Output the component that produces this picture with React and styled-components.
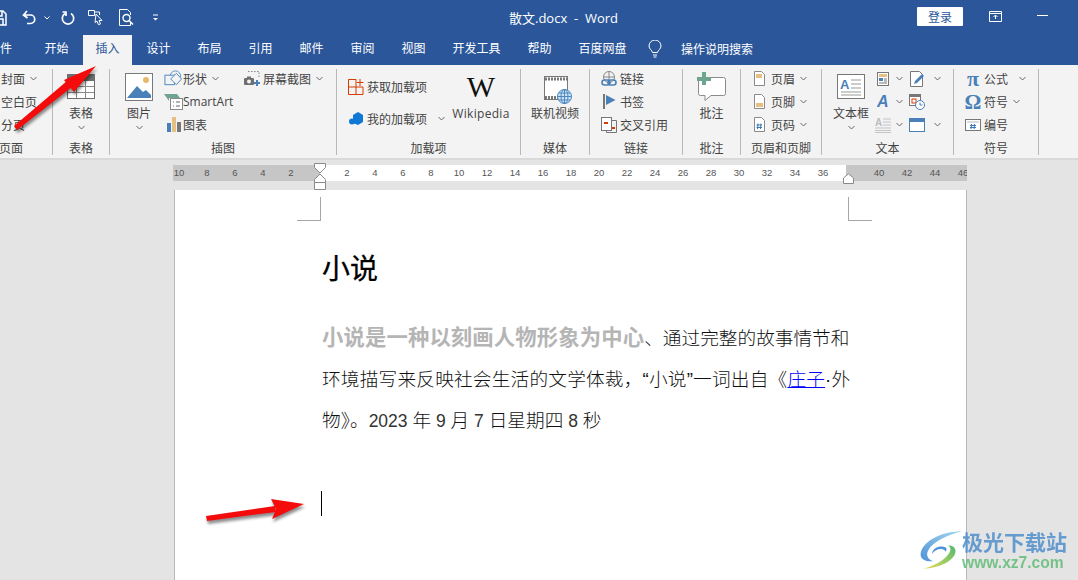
import React from 'react'
import styled, { createGlobalStyle } from 'styled-components'

const GlobalStyle = createGlobalStyle`
  html, body {
    margin: 0;
    padding: 0;
    overflow: hidden;
    background: #e4e4e4;
  }
`

const Shell = styled.div`
  position: relative;
  width: 1078px;
  height: 580px;
  overflow: hidden;
  background: #e4e4e4;
  font-family: "Open Sans", "Noto Sans CJK SC", sans-serif;
  font-size: 12px;
  color: #444;
`

const TitleBar = styled.div`
  display: flex;
  align-items: center;
  height: 35px;
  background: #2b579a;
  color: #fff;
`

const QuickAccess = styled.div`
  display: flex;
  align-items: center;
  width: 518px;
  flex: none;
  margin-left: -9px;
`

const QuickIcon = styled.svg`
  flex: none;
  margin-left: ${p => p.$ml || 0}px;
  fill: none;
  stroke: #fff;
`

const DocTitle = styled.div`
  font-size: 13px;
  white-space: pre;
  width: 408px;
  flex: none;
`

const LoginButton = styled.button`
  width: 46px;
  height: 19px;
  margin-top: -2px;
  padding: 0;
  border: 0;
  border-radius: 1px;
  background: #fff;
  color: #2b579a;
  font: 12px "Noto Sans CJK SC", sans-serif;
  flex: none;
`

const WindowIcon = styled.svg`
  flex: none;
  margin-left: ${p => p.$ml}px;
  margin-top: ${p => p.$mt}px;
  fill: none;
  stroke: #fff;
`

const TabBar = styled.div`
  display: flex;
  align-items: stretch;
  height: 30px;
  margin-left: -19px;
  background: #2b579a;
  gap: 2px;
`

const Tab = styled.div`
  width: 49px;
  flex: none;
  text-align: center;
  line-height: 28px;
  white-space: nowrap;
  color: ${p => (p.$active ? '#2b579a' : '#fff')};
  background: ${p => (p.$active ? '#f3f3f3' : 'transparent')};
`

const FileTab = styled(Tab)`
  text-align: left;
  text-indent: 7px;
`

const WideTab = styled(Tab)`
  width: ${p => p.$w}px;
`

const SearchHint = styled.div`
  display: flex;
  align-items: center;
  height: 28px;
  gap: 19px;
  margin-left: 7px;
  color: #fff;
`

const Ribbon = styled.div`
  display: flex;
  height: 89px;
  padding-top: 4px;
  margin-left: -30px;
  background: #f3f3f3;
  border-bottom: 2px solid #d9d9d9;
`

const Group = styled.div`
  display: flex;
  flex-direction: column;
  flex: none;
  box-sizing: border-box;
  width: ${p => p.$w}px;
  height: 86px;
  border-right: 1px solid #b9b9b9;
`

const GroupBody = styled.div`
  display: flex;
  flex: 1;
  margin-top: -2px;
  padding-left: ${p => p.$pad || 0}px;
  gap: ${p => p.$gap || 0}px;
`

const GroupLabel = styled.div`
  height: 14px;
  line-height: 16px;
  text-align: center;
  white-space: nowrap;
`

const BigItem = styled.div`
  display: flex;
  flex-direction: column;
  align-items: center;
  flex: none;
  width: ${p => p.$w}px;
  white-space: nowrap;
`

const BigIcon = styled.div`
  display: flex;
  align-items: center;
  justify-content: center;
  height: 39px;
`

const BigText = styled.div`
  height: 16px;
  line-height: 16px;
  letter-spacing: ${p => p.$track || 0}px;
`

const WikiGlyph = styled.span`
  font: 400 30px/30px "Liberation Serif", serif;
  color: #111;
`

const Col = styled.div`
  display: flex;
  flex-direction: column;
  flex: none;
  width: ${p => (p.$w ? `${p.$w}px` : 'auto')};
  margin-top: ${p => p.$mt || 0}px;
  gap: ${p => p.$gap || 0}px;
`

const SmallItem = styled.div`
  display: flex;
  align-items: center;
  height: 23px;
  white-space: nowrap;
`

const IconSlot = styled.span`
  display: flex;
  align-items: center;
  justify-content: center;
  flex: none;
  width: ${p => p.$w}px;
  margin-right: ${p => p.$mr || 0}px;
`

const ChevronIcon = styled.svg`
  flex: none;
  margin-left: ${p => (p.$ml === undefined ? 5 : p.$ml)}px;
  margin-top: ${p => p.$mt || 0}px;
  fill: none;
  stroke: #666;
`

const SymbolGlyph = styled.span`
  display: flex;
  justify-content: center;
  font: 700 ${p => p.$size}px/16px "Liberation Serif", serif;
  color: #4a80b8;
`

const Workspace = styled.div`
  display: flex;
  flex-direction: column;
  padding-top: 5px;
`

const Ruler = styled.div`
  display: flex;
  height: 16px;
  margin-left: 173px;
  width: 794px;
  overflow: hidden;
  background: linear-gradient(
    to right,
    #c6c6c6 147px,
    #fff 147px,
    #fff 673px,
    #c6c6c6 673px
  );
`

const RulerTick = styled.span`
  flex: none;
  width: 28px;
  text-align: center;
  font: 9.5px/16px "Liberation Sans", sans-serif;
  color: #555;
  &:first-child {
    margin-left: -8px;
  }
`

const Page = styled.div`
  box-sizing: border-box;
  width: 793px;
  height: 400px;
  margin: 9px 0 0 174px;
  background: #fff;
  border-left: 1px solid #b8b8b8;
  border-right: 1px solid #b8b8b8;
  padding: 7px 94px 0 122px;
  color: #111;
`

const CropRow = styled.div`
  display: flex;
  justify-content: space-between;
`

const CropMark = styled.div`
  box-sizing: border-box;
  width: 24px;
  height: 24px;
  border-bottom: 1px solid #a6a6a6;
  border-${p => p.$side}: 1px solid #a6a6a6;
`

const TextColumn = styled.div`
  padding-left: 25px;
  font-family: "Liberation Sans", "Noto Sans CJK SC", sans-serif;
`

const Heading = styled.h1`
  margin: 27px 0 26px;
  font-size: 28px;
  line-height: 44px;
  font-weight: 400;
  -webkit-text-stroke: 0.3px #000;
  color: #000;
`

const Line = styled.div`
  height: 41px;
  line-height: 41px;
  font-size: 18.67px;
  font-weight: 300;
  white-space: nowrap;
  letter-spacing: ${p => p.$track || 0}px;
`

const Faded = styled.span`
  font-size: 21.33px;
  font-weight: 700;
  letter-spacing: 0.15px;
  color: #b5b5b5;
`

const Digits = styled.span`
  font-size: 17.5px;
  color: #333;
`

const DocLink = styled.a`
  color: #0000ff;
  text-decoration: underline;
`

const Caret = styled.div`
  width: 1px;
  height: 25px;
  margin: 50px 0 0 -1px;
  background: #000;
`

const Overlay = styled.svg`
  position: absolute;
  left: ${p => p.$x}px;
  top: ${p => p.$y}px;
  pointer-events: none;
`

const Watermark = styled.div`
  position: absolute;
  left: 920px;
  top: 530px;
  display: flex;
  align-items: flex-start;
`

const WatermarkText = styled.div`
  display: flex;
  flex-direction: column;
  opacity: 0.85;
`

const WatermarkName = styled.div`
  font: 700 21px/23px "Noto Sans CJK SC", sans-serif;
  color: #4f8fcb;
  white-space: nowrap;
`

const WatermarkUrl = styled.div`
  font: 700 15.6px/19px "Liberation Sans", sans-serif;
  color: #62bd78;
  white-space: nowrap;
`

const Chevron = ({ ml, mt }) => (
  <ChevronIcon width="7" height="5" viewBox="0 0 7 5" $ml={ml} $mt={mt}>
    <path d="M.5 1 3.5 4 6.5 1" />
  </ChevronIcon>
)

const Svg = ({ w, h, children }) => (
  <svg width={w} height={h} viewBox={`0 0 ${w} ${h}`} fill="none">
    {children}
  </svg>
)

const TableIcon = () => (
  <Svg w={28} h={25}>
    <rect x=".5" y=".5" width="27" height="24" fill="#fff" stroke="#6f6f6f" />
    <rect x="0" y="0" width="28" height="7" fill="#6f6f6f" />
    <path d="M9.5 7v17M18.5 7v17M1 12.5h26M1 18.5h26" stroke="#8a8a8a" />
  </Svg>
)

const PictureIcon = () => (
  <Svg w={28} h={28}>
    <rect x=".5" y=".5" width="27" height="27" fill="#fff" stroke="#7a7a7a" />
    <circle cx="21" cy="7" r="3" fill="#e8b96b" />
    <path d="M2 25 12 13l6 6 3-2 5 5v3z" fill="#4a80b8" />
  </Svg>
)

const ShapeIcon = () => (
  <Svg w={20} h={17}>
    <circle cx="12" cy="6" r="5.5" stroke="#5c8fc4" />
    <rect x="1" y="5" width="10" height="10" stroke="#4a86c0" fill="#f3f3f3" />
    <path d="M13 3l5.5 6-5.5 6-6-6z" stroke="#4a86c0" fill="#f3f3f3" />
  </Svg>
)

const SmartArtIcon = () => (
  <Svg w={19} h={17}>
    <path d="M0 1h13l3 4H5v3z" fill="#6fa58e" />
    <rect x="6.5" y="5.5" width="12" height="11" fill="#fff" stroke="#8a8a8a" />
    <path d="M9 9h1M12 9h4M9 13h1M12 13h4" stroke="#666" />
  </Svg>
)

const ChartIcon = () => (
  <Svg w={14} h={15}>
    <rect x="0" y="6" width="4" height="9" fill="#4a80b8" />
    <rect x="5" y="0" width="4" height="15" fill="#e8bf82" />
    <rect x="10" y="5" width="4" height="10" fill="#777" />
  </Svg>
)

const ScreenshotIcon = () => (
  <Svg w={17} h={15}>
    <path d="M4 .5h11v7" stroke="#888" strokeDasharray="1.5 1.5" />
    <rect x="0" y="7" width="10" height="7" rx="1" fill="#6f6f6f" />
    <rect x="3" y="5.5" width="4" height="2" fill="#6f6f6f" />
    <circle cx="5" cy="10.5" r="2" fill="#f3f3f3" />
    <path d="M13 9v6M10 12h6" stroke="#4a80b8" strokeWidth="2" />
  </Svg>
)

const StoreIcon = () => (
  <Svg w={16} h={16}>
    <path d="M.5.5H8V8h7v7.500H.5zM.5 8H8v7.500" stroke="#d83b01" />
    <path d="M12 0v7M8.800 3.500H15.500" stroke="#d83b01" />
  </Svg>
)

const MyAddinIcon = () => (
  <Svg w={15} h={15}>
    <path d="M4 4 9 1l5 3v7l-5 3-5-2z" fill="#0f78d4" />
    <circle cx="3" cy="10.5" r="3" fill="#0f78d4" />
  </Svg>
)

const VideoIcon = () => (
  <Svg w={33} h={34}>
    <g transform="translate(5 6)">
      <rect x=".5" y=".5" width="23" height="23" fill="#fff" stroke="#777" />
      <path d="M1 3h22" stroke="#777" strokeWidth="3" strokeDasharray="2 1" />
      <path d="M1 21.5h22" stroke="#777" strokeWidth="3" strokeDasharray="2 1" />
      <circle cx="20.500" cy="20.500" r="7" fill="#cfe3f4" stroke="#4a86c0" />
      <path d="M13.500 20.500h14M20.500 13.500v14M15 17h11M15 24h11" stroke="#4a86c0" />
      <ellipse cx="20.500" cy="20.500" rx="3.500" ry="7" stroke="#4a86c0" />
    </g>
  </Svg>
)

const LinkIcon = () => (
  <Svg w={16} h={16}>
    <circle cx="8" cy="6" r="5.5" stroke="#888" />
    <path d="M2.5 6h11M8 .5v11" stroke="#888" />
    <rect x="1" y="9" width="8" height="5" rx="2.5" stroke="#4a80b8" strokeWidth="1.6" fill="none" />
    <rect x="7" y="9" width="8" height="5" rx="2.5" stroke="#4a80b8" strokeWidth="1.6" fill="none" />
  </Svg>
)

const BookmarkIcon = () => (
  <Svg w={13} h={15}>
    <rect x="0" y="0" width="2" height="15" fill="#777" />
    <path d="M3 1 12.5 6 3 11z" fill="#4a80b8" />
  </Svg>
)

const CrossRefIcon = () => (
  <Svg w={16} h={16}>
    <rect x=".5" y=".5" width="10" height="13" fill="#fff" stroke="#777" />
    <path d="M10.5 3.5h5v12h-10v-2" stroke="#777" fill="none" />
    <path d="M3 6h4" stroke="#d83b01" strokeWidth="2" />
    <path d="M11 11h3" stroke="#d83b01" strokeWidth="2" />
  </Svg>
)

const CommentIcon = () => (
  <Svg w={30} h={29}>
    <path d="M3.500 5.500h23a2 2 0 0 1 2 2v14a2 2 0 0 1-2 2H14l-6 5v-5H3.500a2 2 0 0 1-2-2v-14a2 2 0 0 1 2-2z" fill="#fff" stroke="#8a8a8a" />
    <path d="M5 0h4v5h5v4H9v4H5V9H0V5h5z" fill="#6fa58e" />
  </Svg>
)

const HeaderIcon = ({ part }) => (
  <Svg w={11} h={15}>
    <path d="M.5.5h7l3 3v11H.5z" fill="#fff" stroke="#8a8a8a" />
    {part === 'top' && <rect x="2" y="3" width="6" height="4" fill="#e8bf82" />}
    {part === 'bottom' && <rect x="2" y="9" width="7" height="4" fill="#e8bf82" />}
    {part === 'number' && <path d="M4 6.500 3.500 12M7 6.500 6.500 12M2.500 8H8M2.500 10.500H8" stroke="#3c76b4" />}
  </Svg>
)

const TextBoxIcon = () => (
  <Svg w={28} h={25}>
    <rect x=".5" y=".5" width="27" height="24" fill="#fff" stroke="#777" />
    <path d="M14 6h10M14 10h10M14 14h10M4 18h20M4 21h20" stroke="#999" />
    <text x="3" y="15" fontSize="13" fontWeight="700" fill="#4a80b8" fontFamily="Liberation Sans">A</text>
  </Svg>
)

const QuickPartsIcon = () => (
  <Svg w={12} h={14}>
    <rect x=".5" y=".5" width="11" height="13" fill="#fff" stroke="#777" />
    <rect x="2" y="2" width="8" height="3" fill="#e8bf82" />
    <rect x="2" y="6" width="4" height="3" fill="#4a80b8" />
    <path d="M7 7h3M7 9h3M2 11h8" stroke="#777" />
  </Svg>
)

const WordArtIcon = () => (
  <svg width="13" height="15" viewBox="0 0 13 15">
    <text x="0" y="13" fontSize="16" fontWeight="700" fontStyle="italic" fill="#4a80b8" fontFamily="Liberation Sans">A</text>
  </svg>
)

const DropCapIcon = () => (
  <Svg w={16} h={16}>
    <text x="0" y="9" fontSize="10" fontWeight="700" fill="#bdbdbd" fontFamily="Liberation Sans">A</text>
    <path d="M8 2h8M8 5h8M8 8h8M0 11h16M0 13.500h16M0 15.500h16" stroke="#c4c4c4" />
  </Svg>
)

const SignatureIcon = () => (
  <Svg w={15} h={16}>
    <path d="M.5.5h9l3 3v12H.5z" fill="#fff" stroke="#777" />
    <path d="M4 13l1-3 7-7 2 2-7 7z" fill="#4a80b8" />
  </Svg>
)

const DateIcon = () => (
  <Svg w={16} h={16}>
    <rect x=".5" y=".5" width="11" height="11" fill="#fff" stroke="#777" />
    <path d="M1 2h10" stroke="#777" strokeWidth="2" />
    <rect x="3" y="5" width="4" height="4" stroke="#d83b01" />
    <circle cx="11" cy="11" r="4.500" fill="#fff" stroke="#4a80b8" />
    <path d="M11 8.500V11h2.500" stroke="#4a80b8" />
  </Svg>
)

const ObjectIcon = () => (
  <Svg w={16} h={14}>
    <rect x=".5" y=".5" width="15" height="13" fill="#fff" stroke="#4a80b8" />
    <rect x="0" y="0" width="16" height="4" fill="#4a80b8" />
  </Svg>
)

const NumberIcon = () => (
  <Svg w={16} h={12}>
    <rect x=".5" y=".5" width="15" height="11" fill="#fff" stroke="#777" />
    <path d="M2 3h12" stroke="#bbb" />
    <path d="M6.500 5 6 10M9.500 5 9 10M5 6.500h6M5 8.500h6" stroke="#3c76b4" />
  </Svg>
)

const rulerNumbers = [10, 8, 6, 4, 2, '', 2, 4, 6, 8, 10, 12, 14, 16, 18, 20, 22, 24, 26, 28, 30, 32, 34, 36, '', 40, 42, 44, 46]

const tabs = ['设计', '布局', '引用', '邮件', '审阅', '视图']

const Arrow = ({ x, y, w, h, shaft, head }) => (
  <Overlay $x={x} $y={y} width={w} height={h} viewBox={`0 0 ${w} ${h}`}>
    <defs>
      <filter id={`blur${x}`} x="-20%" y="-20%" width="140%" height="140%">
        <feGaussianBlur stdDeviation="1.5" />
      </filter>
    </defs>
    <g filter={`url(#blur${x})`} transform="translate(1 3)" opacity=".45" fill="#000">
      <path d={shaft} />
      <path d={head} />
    </g>
    <path d={shaft} fill="#f40b0b" />
    <path d={head} fill="#f40b0b" />
  </Overlay>
)

export default function App() {
  return (
    <Shell>
      <GlobalStyle />
      <TitleBar>
        <QuickAccess>
          <QuickIcon width="16" height="16" viewBox="0 0 16 16" strokeWidth="1.5">
            <path d="M1 1h11l3 3v11H1zM4 1v5h7V1M4 15v-6h8v6" />
          </QuickIcon>
          <QuickIcon $ml={15} width="14" height="15" viewBox="0 0 14 15" strokeWidth="1.7">
            <path d="M5 1 1.500 5 5.500 8M2 5h6.500a4.200 4.200 0 0 1 0 8.500H5" />
          </QuickIcon>
          <QuickIcon $ml={8} width="6" height="4" viewBox="0 0 6 4">
            <path d="M.5.500 3 3 5.500.500" />
          </QuickIcon>
          <QuickIcon $ml={11} width="14" height="14" viewBox="0 0 14 14" strokeWidth="1.7">
            <path d="M4 2.500a5.700 5.700 0 1 0 6 0M1.500 1H5v4" />
          </QuickIcon>
          <QuickIcon $ml={13} width="17" height="17" viewBox="0 0 17 17">
            <path d="M.5 1.500h6v5h-6zM6.500 3h5v3" />
            <path d="M8 5l6 6.500h-3l1.500 3.500-2 .7-1.500-3.500L7 13.500z" fill="#2b579a" />
          </QuickIcon>
          <QuickIcon $ml={14} width="15" height="17" viewBox="0 0 15 17">
            <path d="M.5.500h8l3 3V6M11.500 13v3.500H.5V.5" />
            <circle cx="7.500" cy="9" r="3.500" strokeWidth="1.400" />
            <path d="M10 11.500 14 15.500" strokeWidth="1.600" />
          </QuickIcon>
          <QuickIcon $ml={18} width="7" height="7" viewBox="0 0 7 7">
            <path d="M1 1h5" />
            <path d="M1 4h5L3.500 6.500z" fill="#fff" stroke="none" />
          </QuickIcon>
        </QuickAccess>
        <DocTitle>散文.docx  -  Word</DocTitle>
        <LoginButton>登录</LoginButton>
        <WindowIcon $ml={26} $mt={-2} width="13" height="11" viewBox="0 0 13 11">
          <path d="M.5.500h12v10H.5zM.5 2.500h12M6.500 8V4.500M4.500 6l2-2 2 2" />
        </WindowIcon>
        <WindowIcon $ml={35} $mt={-5} width="11" height="1" viewBox="0 0 11 1">
          <path d="M0 .5h11" />
        </WindowIcon>
      </TitleBar>

      <TabBar>
        <FileTab>文件</FileTab>
        <Tab>开始</Tab>
        <Tab $active>插入</Tab>
        {tabs.map(t => (
          <Tab key={t}>{t}</Tab>
        ))}
        <WideTab $w={73}>开发工具</WideTab>
        <WideTab $w={49}>帮助</WideTab>
        <WideTab $w={73}>百度网盘</WideTab>
        <SearchHint>
          <svg width="14" height="18" viewBox="0 0 14 18" fill="none" stroke="#fff">
            <path d="M4.500 12.500C4 10 1 9 1 6a6 6 0 0 1 12 0c0 3-3 4-3.500 6.500zM5 15h4M5.500 17h3" />
          </svg>
          操作说明搜索
        </SearchHint>
      </TabBar>

      <Ribbon>
        <Group $w={83}>
          <GroupBody $pad={31}>
            <Col>
              <SmallItem>封面<Chevron /></SmallItem>
              <SmallItem>空白页</SmallItem>
              <SmallItem>分页</SmallItem>
            </Col>
          </GroupBody>
          <GroupLabel>页面</GroupLabel>
        </Group>

        <Group $w={57}>
          <GroupBody>
            <BigItem $w={56}>
              <BigIcon><TableIcon /></BigIcon>
              <BigText>表格</BigText>
              <Chevron ml={0} mt={3} />
            </BigItem>
          </GroupBody>
          <GroupLabel>表格</GroupLabel>
        </Group>

        <Group $w={227}>
          <GroupBody $pad={14} $gap={10}>
            <BigItem $w={30}>
              <BigIcon><PictureIcon /></BigIcon>
              <BigText>图片</BigText>
              <Chevron ml={0} mt={3} />
            </BigItem>
            <Col $w={70}>
              <SmallItem><IconSlot $w={19}><ShapeIcon /></IconSlot>形状<Chevron /></SmallItem>
              <SmallItem><IconSlot $w={19}><SmartArtIcon /></IconSlot>SmartArt</SmallItem>
              <SmallItem><IconSlot $w={19}><ChartIcon /></IconSlot>图表</SmallItem>
            </Col>
            <Col>
              <SmallItem><IconSlot $w={17} $mr={2}><ScreenshotIcon /></IconSlot>屏幕截图<Chevron /></SmallItem>
            </Col>
          </GroupBody>
          <GroupLabel>插图</GroupLabel>
        </Group>

        <Group $w={184}>
          <GroupBody $pad={11}>
            <Col $w={104} $mt={8} $gap={9}>
              <SmallItem><IconSlot $w={16} $mr={3}><StoreIcon /></IconSlot>获取加载项</SmallItem>
              <SmallItem><IconSlot $w={16} $mr={3}><MyAddinIcon /></IconSlot>我的加载项<Chevron ml={11} /></SmallItem>
            </Col>
            <BigItem $w={58}>
              <BigIcon><WikiGlyph>W</WikiGlyph></BigIcon>
              <BigText $track={0.3}>Wikipedia</BigText>
            </BigItem>
          </GroupBody>
          <GroupLabel>加载项</GroupLabel>
        </Group>

        <Group $w={69}>
          <GroupBody>
            <BigItem $w={68}>
              <BigIcon><VideoIcon /></BigIcon>
              <BigText>联机视频</BigText>
            </BigItem>
          </GroupBody>
          <GroupLabel>媒体</GroupLabel>
        </Group>

        <Group $w={93}>
          <GroupBody $pad={11}>
            <Col>
              <SmallItem><IconSlot $w={16} $mr={3}><LinkIcon /></IconSlot>链接</SmallItem>
              <SmallItem><IconSlot $w={16} $mr={3}><BookmarkIcon /></IconSlot>书签</SmallItem>
              <SmallItem><IconSlot $w={16} $mr={3}><CrossRefIcon /></IconSlot>交叉引用</SmallItem>
            </Col>
          </GroupBody>
          <GroupLabel>链接</GroupLabel>
        </Group>

        <Group $w={58}>
          <GroupBody>
            <BigItem $w={57}>
              <BigIcon><CommentIcon /></BigIcon>
              <BigText>批注</BigText>
            </BigItem>
          </GroupBody>
          <GroupLabel>批注</GroupLabel>
        </Group>

        <Group $w={81}>
          <GroupBody $pad={13}>
            <Col>
              <SmallItem><IconSlot $w={11} $mr={6}><HeaderIcon part="top" /></IconSlot>页眉<Chevron /></SmallItem>
              <SmallItem><IconSlot $w={11} $mr={6}><HeaderIcon part="bottom" /></IconSlot>页脚<Chevron /></SmallItem>
              <SmallItem><IconSlot $w={11} $mr={6}><HeaderIcon part="number" /></IconSlot>页码<Chevron /></SmallItem>
            </Col>
          </GroupBody>
          <GroupLabel>页眉和页脚</GroupLabel>
        </Group>

        <Group $w={132}>
          <GroupBody $pad={9} $gap={4}>
            <BigItem $w={40}>
              <BigIcon><TextBoxIcon /></BigIcon>
              <BigText>文本框</BigText>
              <Chevron ml={0} mt={3} />
            </BigItem>
            <Col $w={30}>
              <SmallItem><IconSlot $w={16}><QuickPartsIcon /></IconSlot><Chevron /></SmallItem>
              <SmallItem><IconSlot $w={16}><WordArtIcon /></IconSlot><Chevron /></SmallItem>
              <SmallItem><IconSlot $w={16}><DropCapIcon /></IconSlot><Chevron /></SmallItem>
            </Col>
            <Col>
              <SmallItem><IconSlot $w={16}><SignatureIcon /></IconSlot><Chevron ml={9} /></SmallItem>
              <SmallItem><IconSlot $w={16}><DateIcon /></IconSlot></SmallItem>
              <SmallItem><IconSlot $w={16}><ObjectIcon /></IconSlot><Chevron ml={9} /></SmallItem>
            </Col>
          </GroupBody>
          <GroupLabel>文本</GroupLabel>
        </Group>

        <Group $w={85}>
          <GroupBody $pad={11}>
            <Col>
              <SmallItem><IconSlot $w={16} $mr={3}><SymbolGlyph $size={22}>π</SymbolGlyph></IconSlot>公式<Chevron ml={11} /></SmallItem>
              <SmallItem><IconSlot $w={16} $mr={3}><SymbolGlyph $size={21}>Ω</SymbolGlyph></IconSlot>符号<Chevron /></SmallItem>
              <SmallItem><IconSlot $w={16} $mr={3}><NumberIcon /></IconSlot>编号</SmallItem>
            </Col>
          </GroupBody>
          <GroupLabel>符号</GroupLabel>
        </Group>
      </Ribbon>

      <Workspace>
        <Ruler>
          {rulerNumbers.map((n, i) => (
            <RulerTick key={i}>{n}</RulerTick>
          ))}
        </Ruler>
        <Page>
          <CropRow>
            <CropMark $side="right" />
            <CropMark $side="left" />
          </CropRow>
          <TextColumn>
            <Heading>小说</Heading>
            <Line><Faded>小说是一种以刻画人物形象为中心</Faded>、通过完整的故事情节和</Line>
            <Line $track={0.2}>环境描写来反映社会生活的文学体裁，“小说”一词出自《<DocLink>庄子</DocLink>·外</Line>
            <Line>物》。<Digits>2023 </Digits>年<Digits> 9 </Digits>月<Digits> 7 </Digits>日星期四<Digits> 8 </Digits>秒</Line>
            <Caret />
          </TextColumn>
        </Page>
      </Workspace>

      <Overlay $x={312} $y={161} width="16" height="30" viewBox="0 0 16 30">
        <path d="M2.500 2.500h11v4L8 12 2.500 6.500zM8 13l5.500 5.500v3h-11v-3zM2.500 21.500h11v7h-11z" fill="#fff" stroke="#8a8a8a" />
      </Overlay>
      <Overlay $x={842} $y={173} width="13" height="12" viewBox="0 0 13 12">
        <path d="M1.500 5 6.500.8l5 4.200v5.500h-10z" fill="#fff" stroke="#8a8a8a" />
      </Overlay>

      <Arrow
        x={10}
        y={60}
        w={92}
        h={76}
        shaft="M4 66 7 70 62 27 57 21z"
        head="M86 6 54 20 64 32z"
      />
      <Arrow
        x={200}
        y={496}
        w={110}
        h={32}
        shaft="M6 20 7 25 76 16 75 10z"
        head="M104 8 71 3 76 13 72 23z"
      />

      <Watermark>
        <svg width="42" height="40" viewBox="0 0 45 42" fill="none">
          <defs>
            <linearGradient id="swirlTop" x1="0" y1="1" x2="1" y2="0">
              <stop offset="0" stopColor="#4f93d8" />
              <stop offset="1" stopColor="#a6d8ee" />
            </linearGradient>
            <linearGradient id="swirlBottom" x1="0" y1="1" x2="1" y2="0">
              <stop offset="0" stopColor="#e9dd5a" />
              <stop offset="1" stopColor="#4fb86e" />
            </linearGradient>
          </defs>
          <path d="M45 1C25 1 5 10 1 23c-2 8 5 11 13 10C8 31 6 26 9 21 14 12 30 5 45 1z" fill="url(#swirlTop)" />
          <path d="M13 25c0-6 8-9 14-7 2 1 2 3 0 5 0-2-2-3-5-3-3 0-7 2-9 5z" fill="#4f93d8" />
          <path d="M4 41c15 0 33-8 34-18 .5-4-3-7-8-7 3 2 4 6 0 10-5 7-16 12-26 15z" fill="url(#swirlBottom)" />
        </svg>
        <WatermarkText>
          <WatermarkName>极光下载站</WatermarkName>
          <WatermarkUrl>www.xz7.com</WatermarkUrl>
        </WatermarkText>
      </Watermark>
    </Shell>
  )
}
